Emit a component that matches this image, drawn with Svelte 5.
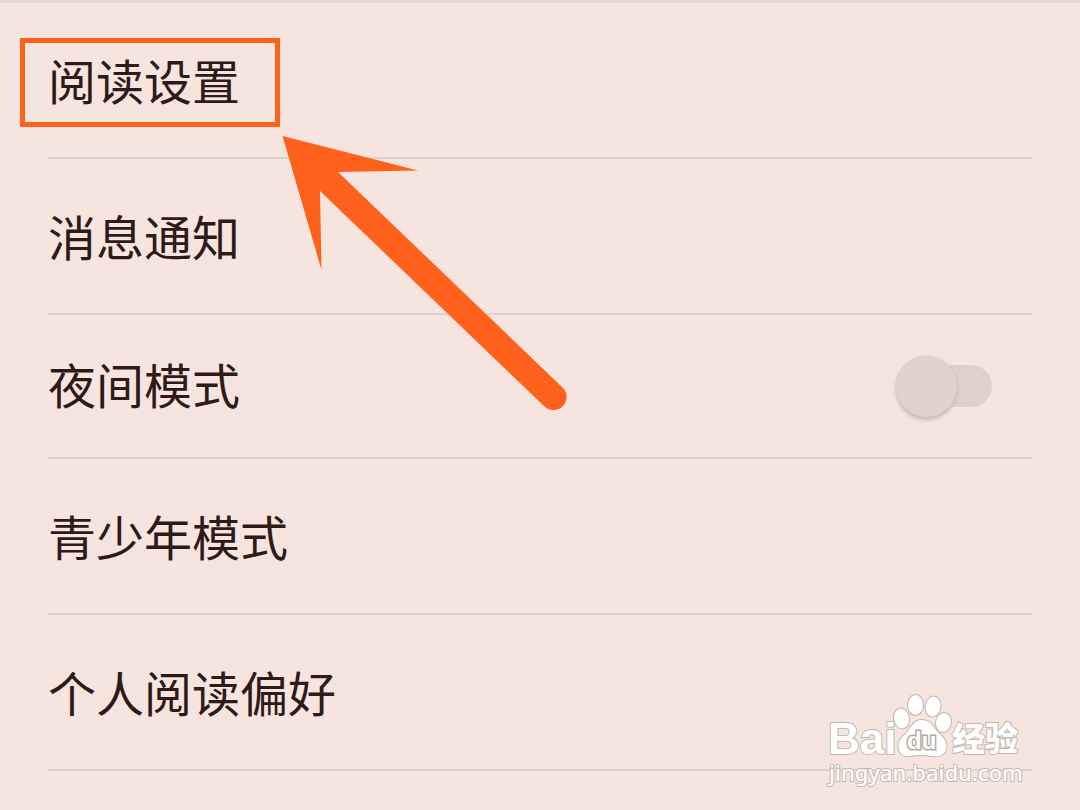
<script lang="ts">
  type Setting = { id: string; label: string; toggle?: boolean; marked?: boolean };

  const settings: Setting[] = [
    { id: "reading", label: "阅读设置", marked: true },
    { id: "messages", label: "消息通知" },
    { id: "night", label: "夜间模式", toggle: true },
    { id: "teen", label: "青少年模式" },
    { id: "preference", label: "个人阅读偏好" },
  ];

  let nightMode = $state(false);
</script>

<main class="page">
  <ul class="settings">
    {#each settings as item (item.id)}
      <li class="row" class:row--toggle={item.toggle}>
        {#if item.toggle}
          <label class="row__label" for={item.id}>{item.label}</label>
          <input class="switch" type="checkbox" role="switch" id={item.id} bind:checked={nightMode} />
        {:else}
          <a class="row__label" class:marked={item.marked} href="#{item.id}">{item.label}</a>
        {/if}
      </li>
    {/each}
  </ul>

  <svg class="arrow" viewBox="0 0 290 280" aria-hidden="true">
    <path d="M1.500 0 L137 34.500 L57 36 L281.500 251.500 A13 13 0 0 1 263.500 270.500 L39 55 L40.500 134 Z" />
  </svg>

  <svg class="watermark" viewBox="0 0 210 100" role="img" aria-label="Baidu 经验">
    <g class="mark">
      <text class="brand" x="8" y="64">Bai</text>
      <ellipse cx="81.500" cy="28.500" rx="7.500" ry="10" transform="rotate(-10 81.500 28.500)" />
      <ellipse cx="95.500" cy="15" rx="7.500" ry="10" />
      <ellipse cx="113" cy="16.500" rx="7.500" ry="10" transform="rotate(10 113 16.500)" />
      <ellipse cx="123.500" cy="32.500" rx="7.500" ry="9.500" transform="rotate(10 123.500 32.500)" />
      <path d="M101.500 30 C95 30 92 35 88 41 C84 46 78 49 78.500 57 C79 64 84 67 90 66 C98 64.500 105 64.500 112 66 C120 67.500 126 64 126.500 57 C127 49 121 46 116 40 C112 34 109 30 101.500 30 Z" />
      <text class="product" x="132" y="61">经验</text>
      <text class="site" x="9" y="91">jingyan.baidu.com</text>
    </g>
    <text class="du" x="87" y="59">du</text>
  </svg>
</main>

<style>
  :global(body) {
    margin: 0;
    background: #f6e5df;
  }

  .page {
    position: relative;
    min-height: 100vh;
    box-sizing: border-box;
    border-top: 3px solid #e6d5d2;
    overflow: hidden;
    background: #f6e5df;
    color: #2e1a19;
    font-family: "Noto Sans CJK SC", sans-serif;
  }

  .settings {
    list-style: none;
    margin: 0;
    padding: 0 48px;
  }

  .row {
    display: flex;
    align-items: center;
    justify-content: space-between;
    padding: 40px 0 42px;
    border-bottom: 2px solid #e1d1cc;
  }

  .row--toggle {
    padding: 32px 40px 38px 0;
  }

  .row__label {
    position: relative;
    color: inherit;
    font-size: 48px;
    font-weight: 400;
    line-height: 72px;
    text-decoration: none;
  }

  .marked::after {
    content: "";
    position: absolute;
    inset: -5px -40px -12px -28px;
    border: 5px solid #ff601c;
  }

  .switch {
    appearance: none;
    position: relative;
    width: 96px;
    height: 60px;
    margin: 6px 0 0;
    cursor: pointer;
  }

  .switch::before {
    content: "";
    position: absolute;
    inset: 9px 0 9px 10px;
    border-radius: 21px;
    background: #e0cfca;
  }

  .switch::after {
    content: "";
    position: absolute;
    top: 0;
    left: 0;
    width: 61px;
    height: 61px;
    border-radius: 50%;
    background: #e2d1cc;
    box-shadow: 0 3px 4px #c9b7b4, 0 0 2px #d8c6c3;
  }

  .switch:checked::after {
    left: 35px;
  }

  .arrow {
    position: absolute;
    top: 133px;
    left: 281px;
    width: 290px;
    height: 280px;
    fill: #ff601c;
    pointer-events: none;
  }

  .watermark {
    position: absolute;
    right: 50px;
    bottom: 20px;
    width: 210px;
    height: 100px;
  }

  .mark {
    fill: #fff;
    stroke: #c4b6b2;
    stroke-width: 2px;
    stroke-linejoin: round;
    paint-order: stroke;
  }

  .brand,
  .du {
    font-family: "Liberation Sans", Arial, sans-serif;
    font-weight: 700;
  }

  .brand {
    font-size: 44px;
  }

  .du {
    font-size: 24px;
    fill: #fff;
    stroke: #b5a7a3;
    stroke-width: 3px;
    paint-order: stroke;
  }

  .product {
    font-size: 33px;
    font-weight: 900;
  }

  .site {
    font-family: "Noto Sans", sans-serif;
    font-size: 22px;
    font-weight: 500;
  }
</style>
